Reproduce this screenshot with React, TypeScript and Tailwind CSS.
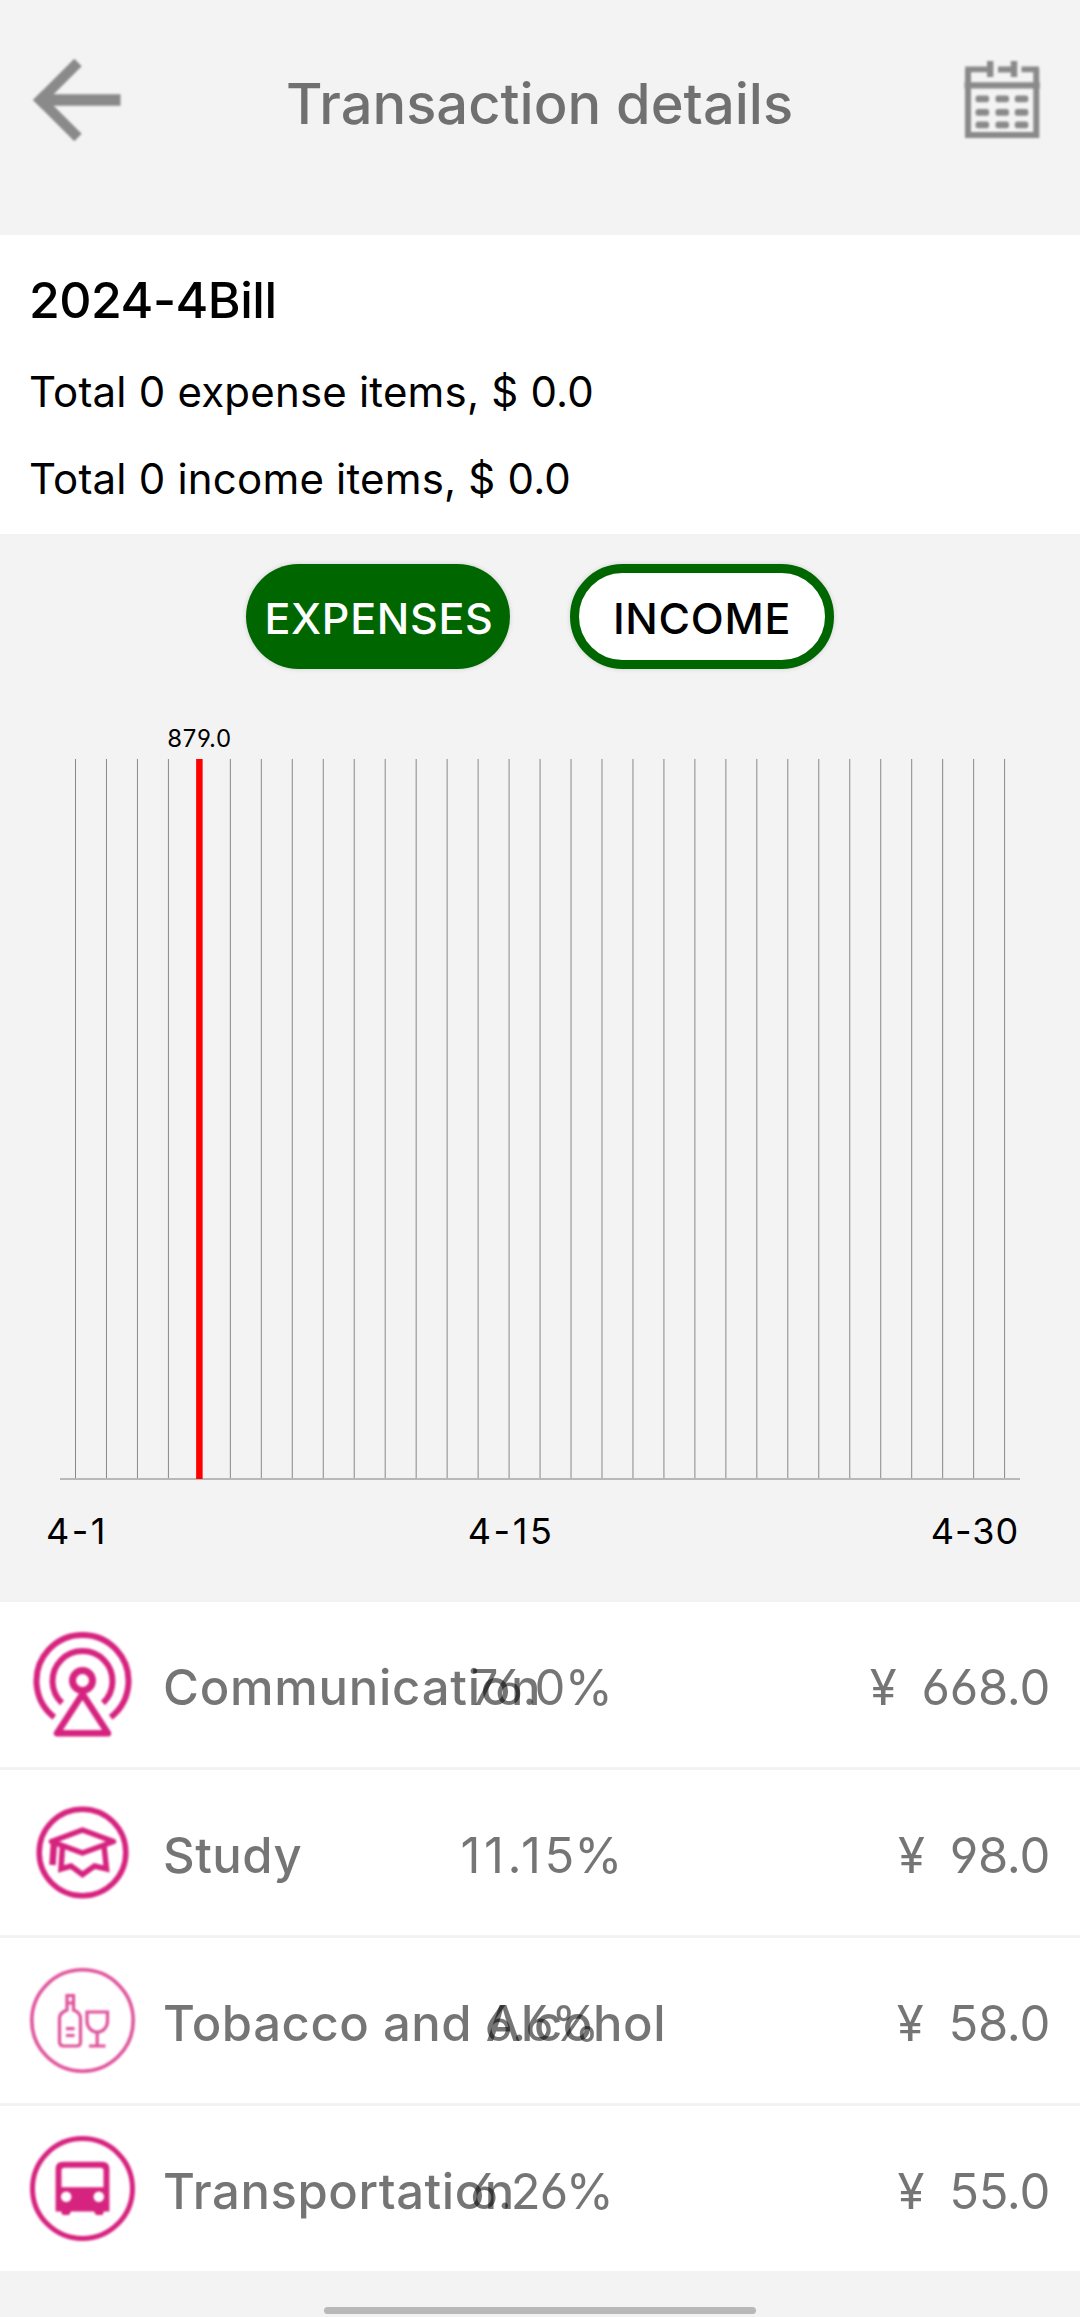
import type { ReactNode } from "react";

const PINK = "#d6237f";
const DAY_STEP = 30.97;
const FIRST_DAY_X = 75.5;
const dayX = (index: number) => FIRST_DAY_X + index * DAY_STEP;

function ArrowIcon() {
  return (
    <svg className="h-[90px] w-[92px] blur-[0.8px]" viewBox="32 55 92 90" fill="none" stroke="#8a8a8a" strokeWidth="10.5">
      <path d="M78 62.500 40.500 100 78 137.500" />
      <path d="M41 100H120.500" strokeWidth="11.5" />
      <path d="M33 100 42 91V109Z" fill="#8a8a8a" stroke="none" />
    </svg>
  );
}

function CalendarIcon() {
  return (
    <svg className="h-[80px] w-[78px] blur-[0.8px]" viewBox="963 60 78 80" fill="#8a8a8a">
      <path d="M968 69V135H1036.300V69" fill="none" stroke="#8a8a8a" strokeWidth="6" />
      <path d="M965.200 66.500H990V72.300H965.200ZM998 66.500H1014V72.500H998ZM1021.500 66.500H1039V72.300H1021.500ZM964.500 82.300H1039.800V88.500H964.500Z" />
      <path d="M987 61H993.400V77H987ZM1010.800 61H1017.200V77H1010.800Z" />
      {[95.5, 108.9, 121.5].map((y) =>
        [975.6, 995.5, 1014.8].map((x) => <rect key={`${x}-${y}`} x={x} y={y} width="13.500" height="6.800" rx="2.500" />),
      )}
    </svg>
  );
}

function CommunicationIcon() {
  return (
    <g stroke={PINK} strokeWidth="6">
      <path d="M24.300 85.300A46 46 0 1 1 80.700 85.300" />
      <path d="M32 71A30 30 0 1 1 73 71" />
      <circle cx="52.5" cy="48.5" r="10" strokeWidth="7" />
      <path d="M52.500 62 27 101.300H78Z" strokeWidth="6.500" strokeLinejoin="round" />
    </g>
  );
}

function StudyIcon() {
  return (
    <g stroke={PINK} strokeWidth="5.500">
      <circle cx="52.5" cy="52.5" r="43.300" strokeWidth="5.500" />
      <path d="M52.500 30 21.500 41.500 52.500 53 83.500 41.500Z" strokeLinejoin="round" />
      <path d="M24 42 22.500 65" strokeWidth="6.500" />
      <path d="M32.500 46 31 69 41 66 52.500 74.500 64.500 66 76.500 69 74 46" />
    </g>
  );
}

function AlcoholIcon() {
  return (
    <g stroke={PINK} strokeWidth="3.200" opacity="0.78">
      <circle cx="52.5" cy="52.5" r="50.700" strokeWidth="3.600" />
      <path d="M37 27.500H43.500V42C48.500 44 50.500 46 50.500 50V74C50.500 77 49.500 78 46.500 78H34C31 78 29.500 77 29.500 74V50C29.500 46 32 44 37 42Z" />
      <path d="M37 35H44M36 60.700H44.500M36 67.500H44.500" />
      <path d="M57 44H77.500V53A10.200 11 0 0 1 57 53ZM67.200 64V77.500M59 78H75.500" />
    </g>
  );
}

function BusIcon() {
  return (
    <g fill={PINK}>
      <circle cx="52.5" cy="52.5" r="50" fill="none" stroke={PINK} strokeWidth="5" />
      <path
        fillRule="evenodd"
        d="M33 25.700H72Q79.400 25.700 79.400 33V75.500H74L72.500 79H66L64 75.500H41L39 79H32.500L31 75.500H25.600V33Q25.600 25.700 33 25.700ZM34.500 31.700Q31.500 31.700 31.500 34.500V51.300H73.500V34.500Q73.500 31.700 70.500 31.700ZM36.200 55.500A5.200 5.200 0 1 0 36.200 66A5.200 5.200 0 1 0 36.200 55.500ZM68.800 55.500A5.200 5.200 0 1 0 68.800 66A5.200 5.200 0 1 0 68.800 55.500Z"
      />
    </g>
  );
}

type Item = { name: string; nameClass: string; percent: ReactNode; percentClass: string; amount: string; icon: ReactNode };

const items: Item[] = [
  { name: "Communication", nameClass: "tracking-[0.75px]", percent: "76.0%", percentClass: "tracking-[-0.7px]", amount: "668.0", icon: <CommunicationIcon /> },
  {
    name: "Study",
    nameClass: "tracking-[0.5px]",
    percent: (
      <>
        <span className="tracking-[3.6px]">11.1</span>5%
      </>
    ),
    percentClass: "",
    amount: "98.0",
    icon: <StudyIcon />,
  },
  { name: "Tobacco and Alcohol", nameClass: "tracking-[0.55px]", percent: "6.6%", percentClass: "tracking-[-0.9px]", amount: "58.0", icon: <AlcoholIcon /> },
  { name: "Transportation", nameClass: "tracking-[0.55px]", percent: "6.26%", percentClass: "tracking-[-0.9px]", amount: "55.0", icon: <BusIcon /> },
];

function BillChart() {
  return (
    <svg className="block h-[933px] w-full" viewBox="0 669 1080 933" textAnchor="middle">
      {Array.from({ length: 31 }, (_, i) => (
        <path key={i} d={`M${dayX(i)} 759V1479`} stroke="#888888" strokeWidth="1" />
      ))}
      <path d="M60 1479H1020" stroke="#b8b8b8" strokeWidth="2" />
      <path d={`M${dayX(4)} 759V1479`} stroke="#ff0000" strokeWidth="6.500" />
      <text x="199.5" y="747" className="text-[24px] tracking-[0.6px]">879.0</text>
      <g className="text-[36px]">
        <text x="77" y="1543.5" className="tracking-[2.5px]">4-1</text>
        <text x="511" y="1543.5" className="tracking-[2.6px]">4-15</text>
        <text x="975" y="1543.5" className="tracking-[1px]">4-30</text>
      </g>
    </svg>
  );
}

export default function App() {
  return (
    <div className="flex h-[2317px] w-[1080px] flex-col overflow-hidden bg-[#f3f3f3] font-['Inter',sans-serif] font-normal text-black [font-feature-settings:'cv03','cv04']">
      <header className="flex h-[235px] items-start justify-between pr-[39px] pl-[32px]">
        <div className="mt-[55px]"><ArrowIcon /></div>
        <h1 className="mt-[64px] ml-[-8px] text-[56px] leading-[80px] font-medium text-black/54">Transaction details</h1>
        <div className="mt-[60px]"><CalendarIcon /></div>
      </header>

      <section className="h-[299px] bg-white px-[29px] pt-[30px] text-[42px] leading-[87px] tracking-[0.2px]">
        <h2 className="mb-[13px] text-[50px] leading-[70px] font-medium tracking-[-0.5px]">2024-4Bill</h2>
        <p>Total 0 expense items, $ 0.0</p>
        <p>Total 0 income items, $ 0.0</p>
      </section>

      <div className="flex justify-center gap-[60px] pt-[30px] text-[43px] font-medium tracking-[0.7px]">
        <button className="flex h-[105px] w-[264px] items-center justify-center rounded-full bg-[#006600] pt-1 pl-[2px] text-white shadow-[0_0_5px_rgba(0,0,0,0.15)]">
          EXPENSES
        </button>
        <button className="flex h-[105px] w-[264px] items-center justify-center rounded-full border-[9px] border-[#006600] bg-white pt-1 shadow-[0_0_5px_rgba(0,0,0,0.15)]">
          INCOME
        </button>
      </div>

      <BillChart />

      <ul className="flex flex-col gap-[3px] text-[49px] leading-[60px] text-black/54">
        {items.map((item) => (
          <li key={item.name} className="relative flex h-[165px] items-center gap-[28px] bg-white px-[30px]">
            <svg className="size-[105px] blur-[0.8px]" viewBox="0 0 105 105" fill="none">{item.icon}</svg>
            <span className={`mt-[6px] font-medium whitespace-nowrap ${item.nameClass}`}>{item.name}</span>
            <span className={`absolute inset-x-0 top-[56px] pl-[3px] text-center ${item.percentClass}`}>{item.percent}</span>
            <span className="mt-[6px] ml-auto flex gap-[25px] tracking-[-0.3px]">
              <span>¥</span>
              <span>{item.amount}</span>
            </span>
          </li>
        ))}
      </ul>

      <div className="mt-[36px] h-[7px] w-[432px] self-center rounded-full bg-[#b8b8b8]" />
    </div>
  );
}
